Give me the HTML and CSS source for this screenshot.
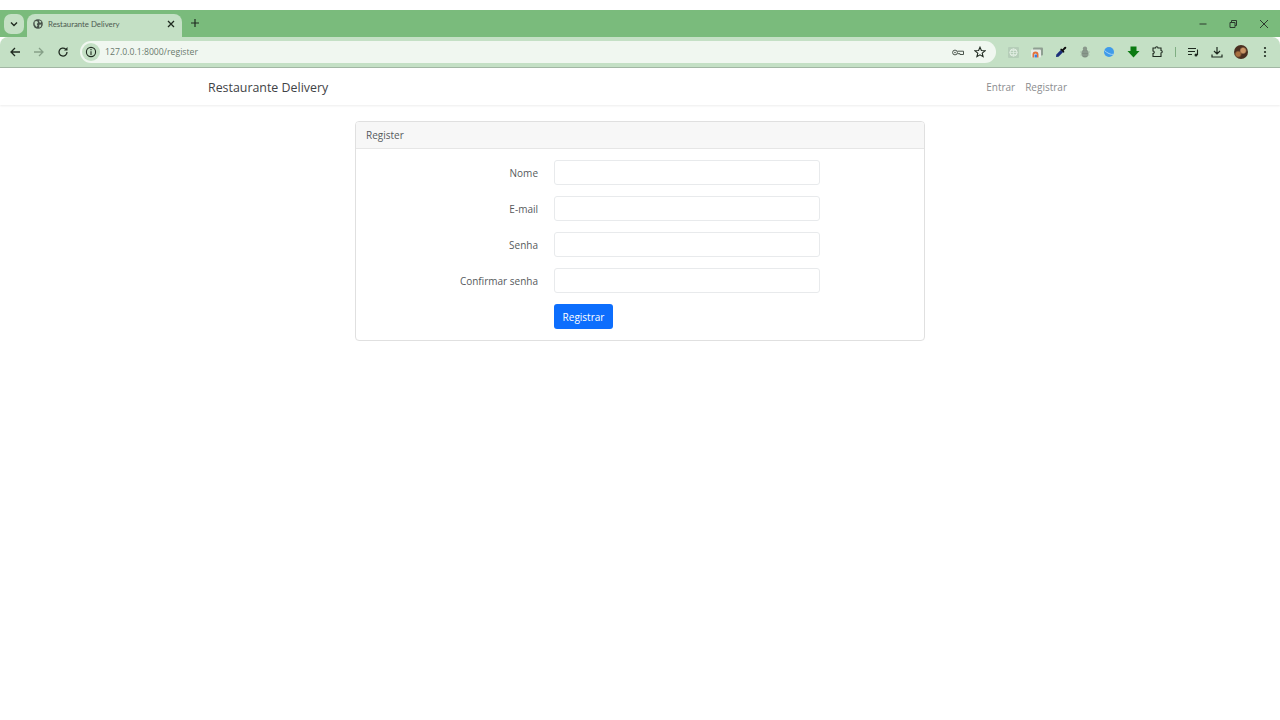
FILE: index.html
```html
<!DOCTYPE html>
<html lang="pt">
<head>
<meta charset="utf-8">
<title>Restaurante Delivery</title>
<link rel="stylesheet" href="styles.css">
</head>
<body>
<div class="browser">
  <div class="tabstrip">
    <div class="tab-search"><svg width="10" height="10" viewBox="0 0 10 10"><path d="M2 3.5 5 6.5 8 3.5" fill="none" stroke="#1f2a20" stroke-width="1.4"/></svg></div>
    <div class="tab">
      <svg class="favicon" width="10" height="10" viewBox="0 0 12 12"><circle cx="6" cy="6" r="5.8" fill="#47524a"/><path d="M2 3 5 2.500 6 4.500 4.500 6 5.500 8 4 9.500 2 6.500ZM7.500 1.500 10 3 9.500 4.500 7.500 4ZM7.500 7 10 6.500 9.500 9 7.500 10.500Z" fill="#c4e0c5"/></svg>
      <span class="tab-title">Restaurante Delivery</span>
      <svg class="tab-close" width="8" height="8" viewBox="0 0 8 8"><path d="M1 1 7 7M7 1 1 7" stroke="#1f2a20" stroke-width="1.300"/></svg>
    </div>
    <svg class="new-tab" width="10" height="10" viewBox="0 0 10 10"><path d="M5 1V9M1 5H9" stroke="#1f2a20" stroke-width="1.200"/></svg>
    <div class="window-controls">
      <span class="win-btn"><svg width="10" height="10" viewBox="0 0 10 10"><path d="M1.500 5H8.500" stroke="#2c3a2e"/></svg></span>
      <span class="win-btn"><svg width="10" height="10" viewBox="0 0 10 10"><path d="M2 3.500H7V8.500H2ZM3.500 3.500V1.500H8.500V6.500H7" fill="none" stroke="#2c3a2e"/></svg></span>
      <span class="win-btn"><svg width="10" height="10" viewBox="0 0 10 10"><path d="M1 1 9 9M9 1 1 9" stroke="#2c3a2e"/></svg></span>
    </div>
  </div>
  <div class="toolbar">
    <span class="tool"><svg width="12" height="12" viewBox="0 0 12 12"><path d="M11 6H2M6 2 2 6 6 10" fill="none" stroke="#1f2a20" stroke-width="1.300"/></svg></span>
    <span class="tool"><svg width="12" height="12" viewBox="0 0 12 12"><path d="M1 6H10M6 2 10 6 6 10" fill="none" stroke="#86a088" stroke-width="1.300"/></svg></span>
    <span class="tool"><svg width="12" height="12" viewBox="0 0 12 12"><path d="M10 6A4 4 0 1 1 8.600 3" fill="none" stroke="#1f2a20" stroke-width="1.300"/><path d="M10.500 1V4.500H7Z" fill="#1f2a20"/></svg></span>
    <div class="omnibox">
      <span class="site-info"><svg width="12" height="12" viewBox="0 0 12 12"><circle cx="6" cy="6" r="4.600" fill="none" stroke="#1f2a20" stroke-width="1.100"/><path d="M6 5.200V9M6 3V4.300" stroke="#1f2a20" stroke-width="1.100"/></svg></span>
      <span class="url">127.0.0.1:8000/register</span>
      <span class="omni-icon key"><svg width="12" height="7" viewBox="0 0 12 7"><circle cx="3" cy="3.500" r="2.400" fill="none" stroke="#4a554c" stroke-width="1"/><circle cx="3" cy="3.500" r=".8" fill="#4a554c"/><path d="M5.500 2.200H11.500V5.500H8V4.700H5.500" fill="none" stroke="#4a554c" stroke-width="1"/></svg></span>
      <span class="omni-icon star"><svg width="12" height="12" viewBox="0 0 12 12"><path d="M6 1.200 7.400 4.500 11 4.800 8.200 7.100 9.100 10.700 6 8.800 2.900 10.700 3.800 7.100 1 4.800 4.600 4.500Z" fill="none" stroke="#1f2a20" stroke-width="1.100"/></svg></span>
    </div>
    <div class="extensions">
      <span class="tool"><svg width="11" height="11" viewBox="0 0 11 11"><rect width="11" height="11" rx="1" fill="#b5ceb8"/><circle cx="5.500" cy="5.500" r="3.600" fill="none" stroke="#e3efe4"/><path d="M5.500 1.500V9.500M1.500 5.500H9.500M2 3.500H9M2 7.500H9" stroke="#e3efe4" stroke-width=".7"/></svg></span>
      <span class="tool"><svg width="12" height="11" viewBox="0 0 12 11"><rect x="2" y="0.500" width="10" height="8" rx="1" fill="#8f9f92"/><rect y="2.500" width="10" height="8" rx="1" fill="#e6ebe6"/><path d="M1.500 10.500V7.500A3 3 0 0 1 7.500 7.500V10.500H6V8A1.500 1.500 0 0 0 3 8V10.500Z" fill="#e2703a"/><rect x="3.500" y="7.500" width="2.500" height="3" fill="#3f7fd9"/></svg></span>
      <span class="tool"><svg width="12" height="12" viewBox="0 0 12 12"><path d="M1 11 1.300 8.500 6 3.800 8.200 6 3.500 10.700Z" fill="#1c2f7a"/><path d="M6 2.500 7.500 3.300 9.500 1A1 1 0 0 1 11 2.500L8.700 4.500 9.500 6 8.500 6.800 5.200 3.500Z" fill="#0c0c0c"/></svg></span>
      <span class="tool"><svg width="10" height="12" viewBox="0 0 10 12"><ellipse cx="5" cy="7.500" rx="3.500" ry="4" fill="#7f8d81"/><circle cx="5" cy="2.800" r="2.200" fill="#8a988c"/><path d="M0 6H10M.5 9H9.500" stroke="#9fb1a2" stroke-width=".7"/></svg></span>
      <span class="tool"><svg width="12" height="12" viewBox="0 0 12 12"><circle cx="6" cy="6" r="5" fill="#3f9bea"/><path d="M1.500 4.500C4 7 8 9 10.500 8.300" fill="none" stroke="#a5d3f5"/></svg></span>
      <span class="tool"><svg width="13" height="12" viewBox="0 0 13 12"><path d="M3.500 .5H9.500V5H12.500L6.500 11.500 .5 5H3.500Z" fill="#0b7a12"/></svg></span>
      <span class="tool"><svg width="12" height="12" viewBox="0 0 12 12"><path d="M2 2H4.500A1.200 1.200 0 0 1 7 2H10V4.500A1.200 1.200 0 0 1 10 7V10.500H2V7.500A1.200 1.200 0 0 0 2 5Z" fill="none" stroke="#1f2a20" stroke-width="1.100"/></svg></span>
      <span class="sep"></span>
      <span class="tool"><svg width="12" height="10" viewBox="0 0 12 10"><path d="M1 1.500H9M1 4.500H8M1 7.500H5" stroke="#1f2a20" stroke-width="1.100"/><path d="M10.500 2.500V8" stroke="#1f2a20" stroke-width="1.100"/><circle cx="9" cy="8" r="1.500" fill="#1f2a20"/></svg></span>
      <span class="tool"><svg width="12" height="12" viewBox="0 0 12 12"><path d="M6 1V7.500M3 5 6 8 9 5M1 8.500V11H11V8.500" fill="none" stroke="#1f2a20" stroke-width="1.200"/></svg></span>
      <span class="tool"><span class="avatar"></span></span>
      <span class="tool"><svg width="4" height="12" viewBox="0 0 4 12"><circle cx="2" cy="2" r="1.100" fill="#1f2a20"/><circle cx="2" cy="6" r="1.100" fill="#1f2a20"/><circle cx="2" cy="10" r="1.100" fill="#1f2a20"/></svg></span>
    </div>
  </div>
</div>

<nav class="navbar">
  <div class="nav-inner">
    <a class="brand" href="#">Restaurante Delivery</a>
    <div class="nav-links">
      <a class="nav-link" href="#">Entrar</a>
      <a class="nav-link" href="#">Registrar</a>
    </div>
  </div>
</nav>

<main class="content">
  <section class="card">
    <header class="card-header">Register</header>
    <form class="card-body">
      <label class="form-label" for="nome">Nome</label>
      <input class="form-input" id="nome" type="text">
      <label class="form-label" for="email">E-mail</label>
      <input class="form-input" id="email" type="email">
      <label class="form-label" for="senha">Senha</label>
      <input class="form-input" id="senha" type="password">
      <label class="form-label" for="confirmar">Confirmar senha</label>
      <input class="form-input" id="confirmar" type="password">
      <button class="btn-primary" type="button">Registrar</button>
    </form>
  </section>
</main>
</body>
</html>
```

FILE: styles.css
```css
* { box-sizing: border-box; }
html, body { margin: 0; height: 100%; background: #fff; overflow: hidden; }
body { font-family: "Open Sans", "Noto Sans", sans-serif; color: #212529; }

.browser { padding-top: 10px; background: #fff; }

.tabstrip {
  height: 27px;
  background: #7abb7c;
  display: flex;
  align-items: flex-end;
  padding-left: 4px;
}
.tab-search {
  width: 20px;
  height: 20px;
  margin-bottom: 3px;
  background: #c4e0c5;
  border-radius: 7px;
  display: flex;
  align-items: center;
  justify-content: center;
}
.tab {
  width: 155px;
  height: 23px;
  margin-left: 3px;
  background: #c4e0c5;
  border-radius: 8px 8px 0 0;
  display: flex;
  align-items: center;
  padding: 0 7px 4px 6px;
}
.favicon { flex: none; }
.tab-title {
  margin-left: 5px;
  flex: 1;
  font-family: "Lato", sans-serif;
  font-size: 7.800px;
  color: #4d5a50;
  white-space: nowrap;
}
.tab-close { flex: none; }
.new-tab { margin: 0 0 9px 8px; }
.window-controls {
  margin-left: auto;
  height: 27px;
  display: flex;
  align-items: center;
  padding-right: 1px;
}
.win-btn {
  width: 30.500px;
  display: flex;
  justify-content: center;
}

.toolbar {
  height: 31px;
  background: #c4e0c5;
  border-bottom: 1px solid #a3b8a5;
  border-radius: 8px 8px 0 0;
  display: flex;
  align-items: center;
  padding: 0 3px;
}
.tool {
  width: 24px;
  height: 24px;
  flex: none;
  display: flex;
  align-items: center;
  justify-content: center;
}
.omnibox {
  flex: 1;
  height: 22px;
  margin-left: 5px;
  background: #f0f7f0;
  border-radius: 11px;
  display: flex;
  align-items: center;
  padding: 0 10px 0 2px;
}
.site-info {
  width: 18px;
  height: 18px;
  border-radius: 50%;
  background: #c4e0c5;
  display: flex;
  align-items: center;
  justify-content: center;
}
.url {
  margin-left: 5px;
  flex: 1;
  font-size: 8.700px;
  color: #6a7a6e;
}
.omni-icon { display: flex; align-items: center; }
.key { margin-right: 10px; }
.extensions { display: flex; align-items: center; margin-left: 5px; }
.sep {
  width: 1px;
  height: 10px;
  margin: 0 5.500px;
  background: #7fae82;
  flex: none;
}
.avatar {
  width: 14px;
  height: 14px;
  border-radius: 50%;
  background:
    radial-gradient(circle at 65% 40%, #c99565 0 18%, transparent 30%),
    radial-gradient(circle at 30% 65%, #a8703f 0 15%, transparent 28%),
    #4a2f20;
}

.navbar {
  height: 37px;
  background: #fff;
  box-shadow: 0 1px 2px rgba(0, 0, 0, .075);
  display: flex;
  justify-content: center;
}
.nav-inner {
  width: 864px;
  display: flex;
  align-items: center;
  justify-content: space-between;
}
.brand {
  padding-top: 1px;
  font-size: 12.400px;
  color: #3f4346;
  text-decoration: none;
}
.nav-links { display: flex; }
.nav-link {
  padding: 0 5px;
  font-size: 10px;
  color: #8b8d8f;
  text-decoration: none;
}

.content {
  width: 570px;
  margin: 16px auto 0;
}
.card {
  border: 1px solid #e0e0e0;
  border-radius: 4px;
  overflow: hidden;
}
.card-header {
  height: 27px;
  padding: 0 10px;
  display: flex;
  align-items: center;
  background: #f7f7f7;
  border-bottom: 1px solid #e6e6e6;
  font-size: 10px;
  color: #565a5d;
}
.card-body {
  padding: 11px 0;
  display: grid;
  grid-template-columns: 182px 266px;
  column-gap: 16px;
  row-gap: 11px;
  align-items: center;
}
.form-label {
  text-align: right;
  font-size: 10px;
  color: #565a5d;
}
.form-input {
  height: 25px;
  border: 1px solid #e8eaec;
  border-radius: 3px;
  background: #fff;
}
.btn-primary {
  grid-column: 2;
  justify-self: start;
  width: 59px;
  height: 25px;
  border: 0;
  border-radius: 3px;
  background: #0d6efd;
  color: #fff;
  font-family: inherit;
  font-size: 10px;
  font-weight: 500;
  padding: 0;
}
```
